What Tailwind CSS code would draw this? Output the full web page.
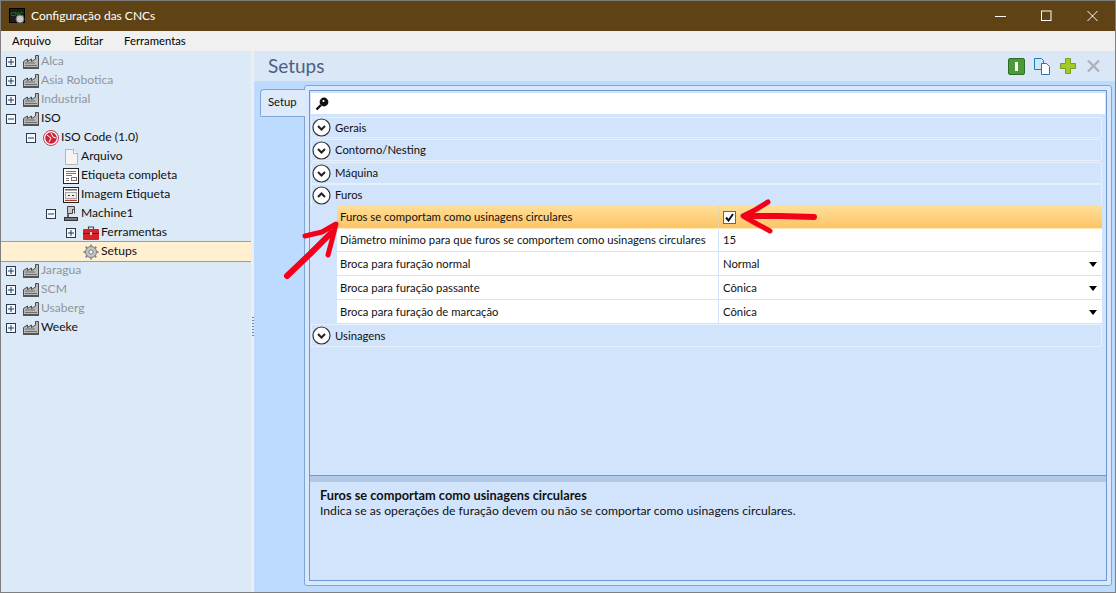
<!DOCTYPE html>
<html lang="pt">
<head>
<meta charset="UTF-8" />
<title>Configuração das CNCs</title>
<script src="https://cdn.jsdelivr.net/npm/@tailwindcss/browser@4"></script>
</head>
<body class="m-0 overflow-hidden bg-[#7f7f7f]">

<svg class="hidden">
  <symbol id="plus" viewBox="0 0 10 10"><rect x="0.5" y="0.5" width="9" height="9" fill="#f4f8fc" stroke="#2b3a4f"/><path d="M2 5h6M5 2v6" stroke="#1f3a60"/></symbol>
  <symbol id="minus" viewBox="0 0 10 10"><rect x="0.5" y="0.5" width="9" height="9" fill="#f4f8fc" stroke="#2b3a4f"/><path d="M2 5h6" stroke="#1f3a60"/></symbol>
  <symbol id="factory" viewBox="0 0 16 14"><path d="M0.5 13.5V6.5l4-2.5v2.5l4-2.5v2.5l4-2.5V0.5h3v13z" fill="#b9b9b9" stroke="#4a4a4a"/><path d="M2 8h10M2 10.500h12" stroke="#6e6e6e"/><rect x="0" y="12" width="16" height="2" fill="#555"/></symbol>
  <symbol id="chev-d" viewBox="0 0 19 19"><circle cx="9.500" cy="9.500" r="8.500" fill="#fff" stroke="#333" stroke-width="1.200"/><path d="M6 8l3.500 3.500L13 8" fill="none" stroke="#222" stroke-width="2"/></symbol>
  <symbol id="chev-u" viewBox="0 0 19 19"><circle cx="9.500" cy="9.500" r="8.500" fill="#fff" stroke="#333" stroke-width="1.200"/><path d="M6 11l3.500-3.500L13 11" fill="none" stroke="#222" stroke-width="2"/></symbol>
  <symbol id="caret" viewBox="0 0 8 5"><path d="M0 0h8L4 5z" fill="#000"/></symbol>
</svg>

<div class="w-[1116px] h-[593px] flex flex-col border border-[#7f7f7f] border-t-0 font-['Lato',sans-serif] text-[11.3px] text-[#111] overflow-hidden">

  <!-- title bar -->
  <header class="h-[31px] shrink-0 bg-[#5f4315] flex items-center text-white pl-[8px] border-t border-[#7a7a7a]">
    <svg width="17" height="16" viewBox="0 0 17 16"><rect x="0.500" y="0.500" width="15" height="14" fill="#1c1c1c" stroke="#000"/><text x="1.500" y="8" font-size="6" font-family="Liberation Sans" fill="#20a020">CNC</text><circle cx="11" cy="11" r="4" fill="#c9c9c9" stroke="#666"/></svg>
    <span class="ml-[5px] text-[12px]">Configuração das CNCs</span>
    <div class="ml-auto flex items-center">
      <svg width="46" height="12" viewBox="0 0 46 12"><path d="M18 6.500h11" stroke="#fff"/></svg>
      <svg width="46" height="12" viewBox="0 0 46 12"><rect x="18.500" y="1" width="9.500" height="9.500" fill="none" stroke="#fff"/></svg>
      <svg width="46" height="12" viewBox="0 0 46 12"><path d="M18.500 1l10 10M28.500 1l-10 10" stroke="#fff"/></svg>
    </div>
  </header>

  <!-- menu bar -->
  <nav class="h-[20px] shrink-0 bg-[#f0f0f0] flex items-center text-black">
    <span class="ml-[11px]">Arquivo</span>
    <span class="ml-[23px]">Editar</span>
    <span class="ml-[21px]">Ferramentas</span>
  </nav>

  <div class="flex flex-1 min-h-0">

    <!-- tree -->
    <aside class="w-[250px] shrink-0 bg-[#dce9f7] pt-px text-[12.100px]">
      <div class="h-[19px] flex items-center pl-[5px]"><svg width="10" height="10"><use href="#plus"/></svg><svg width="16" height="14" class="ml-[7px]"><use href="#factory"/></svg><span class="ml-[2px] text-[#8f959c]">Alca</span></div>
      <div class="h-[19px] flex items-center pl-[5px]"><svg width="10" height="10"><use href="#plus"/></svg><svg width="16" height="14" class="ml-[7px]"><use href="#factory"/></svg><span class="ml-[2px] text-[#8f959c]">Asia Robotica</span></div>
      <div class="h-[19px] flex items-center pl-[5px]"><svg width="10" height="10"><use href="#plus"/></svg><svg width="16" height="14" class="ml-[7px]"><use href="#factory"/></svg><span class="ml-[2px] text-[#8f959c]">Industrial</span></div>
      <div class="h-[19px] flex items-center pl-[5px]"><svg width="10" height="10"><use href="#minus"/></svg><svg width="16" height="14" class="ml-[7px]"><use href="#factory"/></svg><span class="ml-[2px]">ISO</span></div>
      <div class="h-[19px] flex items-center pl-[25px]"><svg width="10" height="10"><use href="#minus"/></svg>
        <svg width="16" height="16" viewBox="0 0 16 16" class="ml-[7px]"><circle cx="8" cy="8" r="7.500" fill="#fff" stroke="#c8384a"/><circle cx="8" cy="8" r="5.800" fill="#c8243c"/><path d="M4 5l4 3-2 4M8 3l2 4 3 1" stroke="#fff" fill="none"/></svg>
        <span class="ml-[2px]">ISO Code (1.0)</span></div>
      <div class="h-[19px] flex items-center pl-[63px]">
        <svg width="15" height="16" viewBox="0 0 15 16"><path d="M1.500 0.500h8l4 4v11h-12z" fill="#f4f4f4" stroke="#b5b5b5"/><path d="M9.500 0.500v4h4" fill="#fff" stroke="#b5b5b5"/></svg>
        <span class="ml-[2px]">Arquivo</span></div>
      <div class="h-[19px] flex items-center pl-[62px]">
        <svg width="16" height="16" viewBox="0 0 16 16"><rect x="0.500" y="0.500" width="15" height="15" fill="#fff" stroke="#222"/><path d="M3 3.500h10M3 5.500h10M3 7.500h6M3 10.500h3M3 12.500h3" stroke="#777"/><rect x="8.500" y="9.500" width="5" height="3" fill="none" stroke="#777"/></svg>
        <span class="ml-[2px]">Etiqueta completa</span></div>
      <div class="h-[19px] flex items-center pl-[62px]">
        <svg width="16" height="16" viewBox="0 0 16 16"><rect x="0.500" y="0.500" width="15" height="15" fill="#fff" stroke="#222"/><rect x="2" y="2" width="12" height="1.500" fill="#666"/><rect x="2.500" y="5.500" width="11" height="6" fill="#eee" stroke="#555" stroke-dasharray="1 1"/><path d="M5 8.500h2M9 8.500h2" stroke="#333"/><rect x="2" y="12.800" width="12" height="1.200" fill="#c0392b"/></svg>
        <span class="ml-[2px]">Imagem Etiqueta</span></div>
      <div class="h-[19px] flex items-center pl-[45px]"><svg width="10" height="10"><use href="#minus"/></svg>
        <svg width="14" height="15" viewBox="0 0 14 15" class="ml-[8px]"><path d="M3.500 0.500h7v3h-2v4h-5z" fill="#c9c9c9" stroke="#444"/><path d="M8.500 3.500h2v4" fill="none" stroke="#444"/><rect x="3" y="8" width="2" height="3" fill="#666"/><rect x="0.500" y="11.500" width="13" height="3" fill="#777" stroke="#333"/></svg>
        <span class="ml-[3px]">Machine1</span></div>
      <div class="h-[19px] flex items-center pl-[65px]"><svg width="10" height="10"><use href="#plus"/></svg>
        <svg width="16" height="14" viewBox="0 0 16 14" class="ml-[7px]"><path d="M5.500 3V1h5v2" fill="none" stroke="#444" stroke-width="1.200"/><rect x="0" y="3" width="16" height="11" rx="1" fill="#d2232a"/><rect x="0" y="7" width="16" height="1" fill="#7c1015"/><rect x="7" y="6" width="2" height="3" fill="#f2d0d0"/></svg>
        <span class="ml-[2px]">Ferramentas</span></div>
      <div class="h-[21px] -my-px relative flex items-center pl-[82px] bg-[#fff0d2] border-y border-[#f08a1c]">
        <svg width="16" height="16" viewBox="0 0 16 16"><path d="M8 2.500a5.500 5.500 0 1 0 0 11a5.500 5.500 0 0 0 0-11z" fill="#c6c6c6" stroke="#777"/><circle cx="8" cy="8" r="2.200" fill="#f4f4f4" stroke="#777"/><path d="M8 0.500v2.500M8 13v2.500M0.500 8H3M13 8h2.500M2.700 2.700l1.800 1.800M11.500 11.500l1.800 1.800M13.300 2.700l-1.800 1.800M4.500 11.500l-1.800 1.800" stroke="#8a8a8a" stroke-width="1.800"/></svg>
        <span class="ml-[2px]">Setups</span></div>
      <div class="h-[19px] flex items-center pl-[5px]"><svg width="10" height="10"><use href="#plus"/></svg><svg width="16" height="14" class="ml-[7px]"><use href="#factory"/></svg><span class="ml-[2px] text-[#8f959c]">Jaragua</span></div>
      <div class="h-[19px] flex items-center pl-[5px]"><svg width="10" height="10"><use href="#plus"/></svg><svg width="16" height="14" class="ml-[7px]"><use href="#factory"/></svg><span class="ml-[2px] text-[#8f959c]">SCM</span></div>
      <div class="h-[19px] flex items-center pl-[5px]"><svg width="10" height="10"><use href="#plus"/></svg><svg width="16" height="14" class="ml-[7px]"><use href="#factory"/></svg><span class="ml-[2px] text-[#8f959c]">Usaberg</span></div>
      <div class="h-[19px] flex items-center pl-[5px]"><svg width="10" height="10"><use href="#plus"/></svg><svg width="16" height="14" class="ml-[7px]"><use href="#factory"/></svg><span class="ml-[2px]">Weeke</span></div>
    </aside>

    <!-- splitter -->
    <div class="w-[3px] shrink-0 bg-[#eeeeee] flex items-center justify-center">
      <div class="w-[2px] h-[20px] mb-[-10px] bg-[repeating-linear-gradient(#5b86b8_0_1px,transparent_1px_3px)]"></div>
    </div>

    <!-- right side -->
    <main class="flex-1 min-w-0 flex flex-col bg-[#bddaff]">
      <div class="h-[30px] shrink-0 bg-[#dae7f7] flex items-center pl-[14px] pr-[14px]">
        <span class="text-[19px] text-[#4d6082]">Setups</span>
        <div class="ml-auto flex items-center">
          <svg width="17" height="17" viewBox="0 0 17 17"><rect x="0.500" y="0.500" width="16" height="16" rx="1.500" fill="#4a9a38" stroke="#2f6b2a"/><rect x="7" y="4" width="3" height="9" fill="#fff"/></svg>
          <svg width="17" height="17" viewBox="0 0 17 17" class="ml-[9px]"><path d="M0.500 0.500h7l2 2v9h-9z" fill="#cfe6f6" stroke="#1f7ab8"/><path d="M7.500 5.500h5l3 3v8h-8z" fill="#fff" stroke="#1f7ab8"/></svg>
          <svg width="16" height="16" viewBox="0 0 16 16" class="ml-[9px]"><path d="M5.500 0.500h5v5h5v5h-5v5h-5v-5h-5v-5h5z" fill="#a3c92a" stroke="#7d9e1e"/></svg>
          <svg width="15" height="14" viewBox="0 0 15 14" class="ml-[10px]"><path d="M2 1.500l11 11M13 1.500l-11 11" stroke="#aeb3ba" stroke-width="2.400"/></svg>
        </div>
      </div>

      <div class="flex-1 min-h-0 flex pl-[6px] pr-[3px] pt-[4px] pb-[6px]">
        <div class="w-[45px] h-[28px] mt-[4px] shrink-0 -mr-px relative z-10 bg-[#dceafb] border border-r-0 border-[#7fa4d8] rounded-tl-[4px] rounded-bl-[2px] flex items-center pl-[7px] pb-[2px]">Setup</div>

        <div class="flex-1 min-w-0 border border-[#7fa4d8] rounded-[3px] bg-[#d9e8fb] p-[4px] flex">
          <div class="flex-1 min-w-0 border border-[#6f97d6] bg-[#d2e4fb] flex flex-col">
            <div class="h-[21px] shrink-0 mx-px mt-[2px] bg-white flex items-center pl-[4px]">
              <svg width="14" height="14" viewBox="0 0 14 14"><circle cx="9" cy="5" r="4.400" fill="#111"/><circle cx="8.500" cy="4" r="1.100" fill="#fff"/><path d="M6 8L1.500 12.500" stroke="#111" stroke-width="2.400"/></svg>
            </div>
            <div class="flex-1 min-h-0 pl-px pr-[4px] pt-[3px]">
              <div class="h-[21px] flex items-center gap-[4px] bg-[#d2e4fb] border border-[#e6f0fc] rounded-[2px] mb-px"><svg width="19" height="19"><use href="#chev-d"/></svg><span class="pt-[2px]">Gerais</span></div>
              <div class="h-[22px] flex items-center gap-[4px] bg-[#d2e4fb] border border-[#e6f0fc] rounded-[2px] mb-px"><svg width="19" height="19"><use href="#chev-d"/></svg><span>Contorno/Nesting</span></div>
              <div class="h-[22px] flex items-center gap-[4px] bg-[#d2e4fb] border border-[#e6f0fc] rounded-[2px]"><svg width="19" height="19"><use href="#chev-d"/></svg><span>Máquina</span></div>
              <div class="h-[22px] flex items-center gap-[4px] bg-[#d2e4fb] border-x border-t border-[#e6f0fc] rounded-t-[2px]"><svg width="19" height="19"><use href="#chev-u"/></svg><span>Furos</span></div>

              <div class="ml-[26px]">
                <div class="h-[23px] flex items-center bg-gradient-to-b from-[#ffdf98] to-[#fdc463] border-b border-[#ffe9bd]">
                  <div class="w-[382px] pl-[3px] border-r border-[#e8d3a4] h-full flex items-center whitespace-nowrap">Furos se comportam como usinagens circulares</div>
                  <div class="pl-[4px]"><div class="w-[13px] h-[13px] bg-white border border-[#666] flex items-center justify-center"><svg width="9" height="9" viewBox="0 0 9 9"><path d="M1 4.500l2.500 3L8 1" fill="none" stroke="#111" stroke-width="2"/></svg></div></div>
                </div>
                <div class="h-[23px] flex items-center bg-white border-b border-[#d2e4fb]">
                  <div class="w-[382px] pl-[3px] border-r border-[#d2e4fb] h-full flex items-center whitespace-nowrap">Diâmetro mínimo para que furos se comportem como usinagens circulares</div>
                  <div class="pl-[4px]">15</div>
                </div>
                <div class="h-[24px] flex items-center bg-white border-b border-[#d2e4fb]">
                  <div class="w-[382px] pl-[3px] pt-[2px] border-r border-[#d2e4fb] h-full flex items-center whitespace-nowrap">Broca para furação normal</div>
                  <div class="pl-[4px] pt-[2px]">Normal</div>
                  <svg width="8" height="5" class="ml-auto mr-[5px] mt-[2px]"><use href="#caret"/></svg>
                </div>
                <div class="h-[24px] flex items-center bg-white border-b border-[#d2e4fb]">
                  <div class="w-[382px] pl-[3px] pt-[2px] border-r border-[#d2e4fb] h-full flex items-center whitespace-nowrap">Broca para furação passante</div>
                  <div class="pl-[4px] pt-[2px]">Cônica</div>
                  <svg width="8" height="5" class="ml-auto mr-[5px] mt-[2px]"><use href="#caret"/></svg>
                </div>
                <div class="h-[24px] flex items-center bg-white border-b border-[#d2e4fb]">
                  <div class="w-[382px] pl-[3px] pt-[2px] border-r border-[#d2e4fb] h-full flex items-center whitespace-nowrap">Broca para furação de marcação</div>
                  <div class="pl-[4px] pt-[2px]">Cônica</div>
                  <svg width="8" height="5" class="ml-auto mr-[5px] mt-[2px]"><use href="#caret"/></svg>
                </div>
              </div>

              <div class="h-[23px] flex items-center gap-[4px] bg-[#d2e4fb] border border-[#e6f0fc] rounded-[2px]"><svg width="19" height="19"><use href="#chev-d"/></svg><span class="pt-[2px]">Usinagens</span></div>
            </div>

            <div class="h-[105px] shrink-0 border-t border-[#6f97d6]">
              <div class="h-[6px] bg-[#b3c9e8]"></div>
              <div class="pl-[10px] pt-[5px] leading-[16px]">
                <div class="font-bold text-[12.800px]">Furos se comportam como usinagens circulares</div>
                <div class="text-[12.200px]">Indica se as operações de furação devem ou não se comportar como usinagens circulares.</div>
              </div>
            </div>
          </div>
        </div>
      </div>
    </main>
  </div>
</div>

<!-- red annotation arrows over the screenshot -->
<svg class="absolute left-0 top-0 pointer-events-none" width="1116" height="593" viewBox="0 0 1116 593">
  <path d="M287 276L312 252L331 233" fill="none" stroke="#f5001a" stroke-width="6" stroke-linecap="round"/>
  <path d="M305 236L322 232L336 224L332 240L328 255" fill="none" stroke="#f5001a" stroke-width="5" stroke-linecap="round" stroke-linejoin="round"/>
  <path d="M814 217L780 216H748" fill="none" stroke="#f5001a" stroke-width="6" stroke-linecap="round"/>
  <path d="M768 202L755 210L743 216L757 224L770 231" fill="none" stroke="#f5001a" stroke-width="5" stroke-linecap="round" stroke-linejoin="round"/>
</svg>

</body>
</html>
